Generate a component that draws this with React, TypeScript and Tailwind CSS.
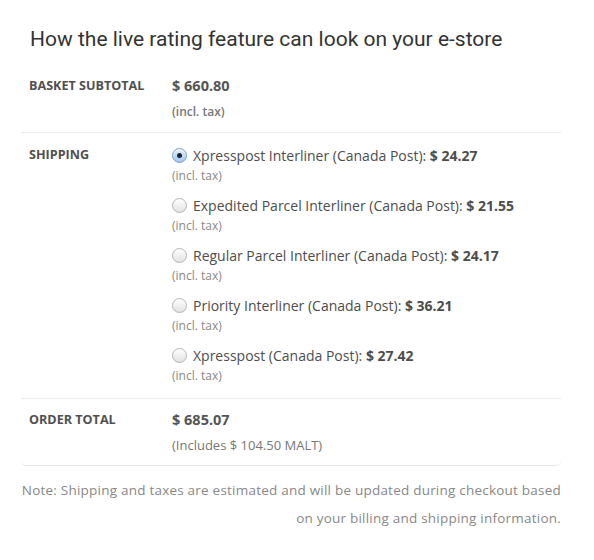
const options = [
  { name: 'Xpresspost Interliner (Canada Post):', price: '$ 24.27', selected: true },
  { name: 'Expedited Parcel Interliner (Canada Post):', price: '$ 21.55' },
  { name: 'Regular Parcel Interliner (Canada Post):', price: '$ 24.17' },
  { name: 'Priority Interliner (Canada Post):', price: '$ 36.21' },
  { name: 'Xpresspost (Canada Post):', price: '$ 27.42' },
];

function Radio({ selected }: { selected?: boolean }) {
  if (selected) {
    return (
      <span className="flex h-[15px] w-[15px] shrink-0 items-center justify-center rounded-full border border-[#7e9fc4] bg-gradient-to-b from-[#e3f0fc] to-[#9ec8f0] shadow-[inset_0_1px_1px_rgba(255,255,255,0.8)]">
        <span className="h-[5px] w-[5px] rounded-full bg-[#1d2530]" />
      </span>
    );
  }
  return (
    <span className="h-[15px] w-[15px] shrink-0 rounded-full border border-[#b4b4b4] bg-gradient-to-b from-white to-[#e2e2e2]" />
  );
}

export default function App() {
  return (
    <div className="h-[560px] w-[594px] bg-white px-[21px] pt-[25px] font-['Open_Sans',sans-serif] text-[#555]">
      <h1 className="mb-[13px] pl-[9px] font-['Roboto',sans-serif] text-[21px] leading-[28px] text-[#333]">
        How the live rating feature can look on your e-store
      </h1>

      <div className="w-[540px] rounded-b-[5px] border-b border-[#e6e6e6]">
        <div className="grid grid-cols-[143px_1fr] pb-[10px] pl-2 pt-[10px]">
          <div className="text-[12.6px] font-bold uppercase leading-[20px] text-[#505050]">Basket subtotal</div>
          <div>
            <div className="text-[14.5px] font-bold leading-[20px]">$ 660.80</div>
            <div className="mt-[6px] text-[12px] font-semibold leading-[20px] text-[#777]">(incl. tax)</div>
          </div>
        </div>

        <div className="grid grid-cols-[143px_1fr] border-t border-[#ececec] pb-3 pl-2 pt-[11px]">
          <div className="text-[12.6px] font-bold uppercase leading-[22px] text-[#505050]">Shipping</div>
          <div className="flex flex-col gap-2">
            {options.map((o) => (
              <div key={o.name}>
                <label className="flex h-[22px] items-center gap-[6px] text-[14px] text-[#4d4d4d]">
                  <Radio selected={o.selected} />
                  <span>
                    {o.name} <b>{o.price}</b>
                  </span>
                </label>
                <div className="text-[12px] leading-[20px] text-[#888]">(incl. tax)</div>
              </div>
            ))}
          </div>
        </div>

        <div className="grid grid-cols-[143px_1fr] border-t border-[#ececec] pb-[10px] pl-2 pt-[11px]">
          <div className="text-[12.6px] font-bold uppercase leading-[20px] text-[#505050]">Order total</div>
          <div>
            <div className="text-[14.5px] font-bold leading-[20px]">$ 685.07</div>
            <div className="mt-[5px] text-[13px] leading-[20px] text-[#777]">(Includes $ 104.50 MALT)</div>
          </div>
        </div>
      </div>

      <p className="mt-[10px] w-[540px] text-right text-[13.5px] leading-[28px] tracking-[0.22px] text-[#888]">
        Note: Shipping and taxes are estimated and will be updated during checkout based on your billing and shipping
        information.
      </p>
    </div>
  );
}
